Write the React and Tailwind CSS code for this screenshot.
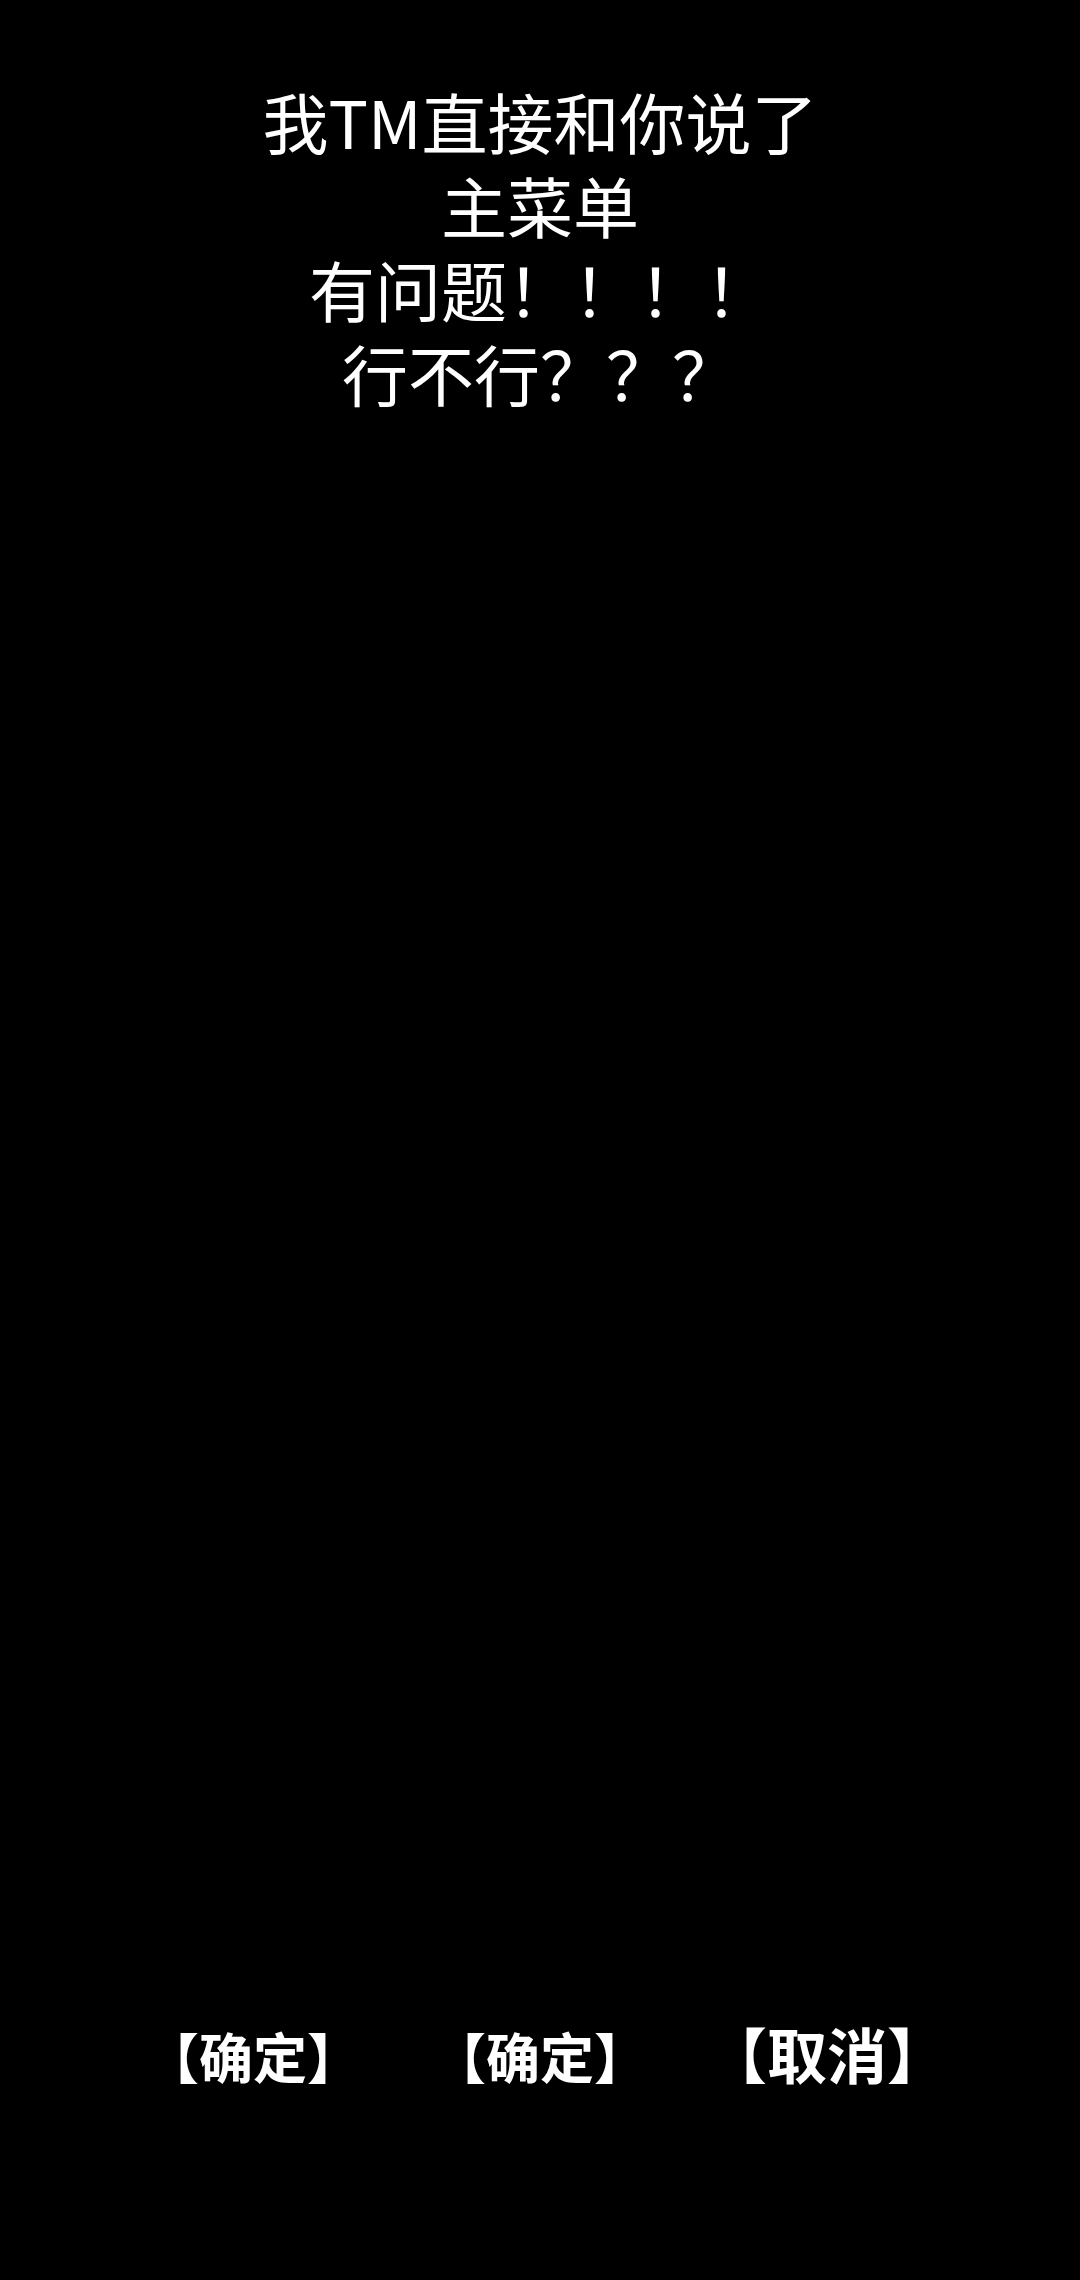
export default function App() {
    const lines = ["我TM直接和你说了", "主菜单", "有问题！！！！", "行不行？？？"];

    const buttons = [
        { label: "【确定】", size: "text-[54px]" },
        { label: "【确定】", size: "text-[54px]" },
        { label: "【取消】", size: "text-[60px]" },
    ];

    return (
        <div
            className="flex h-[2280px] w-[1080px] flex-col bg-black text-white"
            style={{ fontFamily: '"Noto Sans CJK SC", "Noto Sans", sans-serif' }}
        >
            <div className="flex flex-col items-center pt-[78px] text-[66px] leading-[84px]">
                {lines.map((line, i) => (
                    <div key={i} className="whitespace-nowrap">{line}</div>
                ))}
            </div>

            <div className="mt-auto mb-[197px] flex items-baseline justify-center">
                {buttons.map((b, i) => (
                    <div key={i} className="flex w-[287px] justify-center">
                        <span className={`${b.size} font-semibold leading-none whitespace-nowrap`}>
                            {b.label}
                        </span>
                    </div>
                ))}
            </div>
        </div>
    );
}
